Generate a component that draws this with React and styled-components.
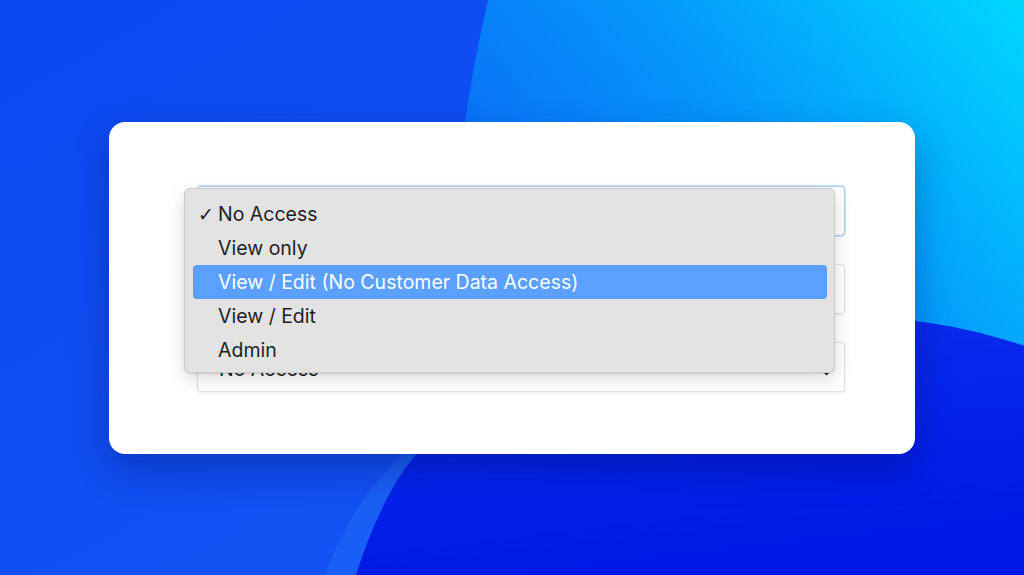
import styled, { createGlobalStyle } from 'styled-components';

const options = ['No Access', 'View only', 'View / Edit (No Customer Data Access)', 'View / Edit', 'Admin'];
const selected = 0;
const highlighted = 2;

const GlobalStyle = createGlobalStyle`
  html, body {
    margin: 0;
    padding: 0;
    width: 100%;
    height: 100%;
    overflow: hidden;
  }
  body {
    font-family: 'Inter', 'Noto Sans', sans-serif;
    -webkit-font-smoothing: antialiased;
  }
`;

const Page = styled.div`
  position: relative;
  width: 1024px;
  height: 575px;
  display: flex;
  align-items: center;
  justify-content: center;
  background: #0e4ff2;
  overflow: hidden;
`;

const Backdrop = styled.svg`
  position: absolute;
  inset: 0;
  width: 100%;
  height: 100%;
`;

const Card = styled.div`
  position: relative;
  width: 806px;
  height: 332px;
  box-sizing: border-box;
  padding: 64px 70px 0 88px;
  background: #fff;
  border-radius: 16px;
  box-shadow: 0 16px 36px rgba(0, 10, 80, 0.3);
`;

const Fields = styled.div`
  position: relative;
  display: flex;
  flex-direction: column;
  gap: 28px;
  width: 648px;
`;

const SelectBox = styled.div`
  position: relative;
  height: 50px;
  box-sizing: border-box;
  display: flex;
  align-items: center;
  justify-content: space-between;
  padding: 5px 13px 0 21px;
  background: #fff;
  border: 1px solid ${(p) => (p.$focused ? '#a8d1ef' : '#e1e1e1')};
  border-radius: 4px;
  box-shadow: ${(p) =>
    p.$focused ? '0 0 0 1px #cfe5f6, 0 1px 3px rgba(0,0,0,0.08)' : '0 1px 3px rgba(0,0,0,0.08)'};
  font-size: 19.5px;
  color: #1e1e1e;
`;

const Chevrons = styled.svg`
  width: 9px;
  height: 16px;
`;

const Menu = styled.ul`
  position: absolute;
  top: 2px;
  left: -13px;
  width: 651px;
  box-sizing: border-box;
  margin: 0;
  padding: 8px 7px 5px 8px;
  list-style: none;
  background: #e3e3e3;
  border: 1px solid #cacaca;
  border-radius: 6px;
  box-shadow: 0 6px 18px rgba(0, 0, 0, 0.14), 0 1px 2px rgba(0, 0, 0, 0.1);
`;

const Item = styled.li`
  position: relative;
  height: 34px;
  display: flex;
  align-items: center;
  padding-left: 25px;
  border-radius: 4px;
  font-size: 19.5px;
  color: ${(p) => (p.$active ? '#fff' : '#1e1e1e')};
  background: ${(p) => (p.$active ? '#5aa0fc' : 'transparent')};
`;

const Check = styled.span`
  position: absolute;
  left: 5px;
  top: 50%;
  transform: translateY(-52%);
  font-size: 19px;
  font-family: 'DejaVu Sans', sans-serif;
`;

function Select({ focused }) {
  return (
    <SelectBox $focused={focused}>
      <span>No Access</span>
      <Chevrons viewBox="0 0 9 16">
        <path d="M1 5 L4.5 1.5 L8 5" fill="none" stroke="#222" strokeWidth="1.6" />
        <path d="M1 11 L4.5 14.5 L8 11 Z" fill="#222" />
      </Chevrons>
    </SelectBox>
  );
}

function Background() {
  return (
    <Backdrop viewBox="0 0 1024 575" preserveAspectRatio="none">
      <defs>
        <linearGradient id="base" x1="0" y1="0" x2="1" y2="1">
          <stop offset="0" stopColor="#0c48f0" />
          <stop offset="1" stopColor="#1656f4" />
        </linearGradient>
        <linearGradient id="cyan" x1="0" y1="0.6" x2="1" y2="0">
          <stop offset="0" stopColor="#0b62f4" />
          <stop offset="0.5" stopColor="#0596fb" />
          <stop offset="1" stopColor="#00d8ff" />
        </linearGradient>
        <linearGradient id="deep" x1="0" y1="0" x2="0.3" y2="1">
          <stop offset="0" stopColor="#0a30ee" />
          <stop offset="1" stopColor="#0019e6" />
        </linearGradient>
      </defs>
      <rect width="1024" height="575" fill="url(#base)" />
      <path d="M488 0 C472 70 460 140 455 220 C450 300 450 380 460 420 L1024 360 L1024 0 Z" fill="url(#cyan)" />
      <path d="M325 575 C345 520 375 475 415 445 L900 320 C960 330 1000 338 1024 345 L1024 575 Z" fill="#1a62f5" opacity="0.85" />
      <path d="M356 575 C370 530 392 480 420 450 C520 360 700 320 915 321 C960 326 1000 338 1024 346 L1024 575 Z" fill="url(#deep)" />
    </Backdrop>
  );
}

export default function App() {
  return (
    <>
      <GlobalStyle />
      <Page>
        <Background />
        <Card>
          <Fields>
            <Select focused />
            <Select />
            <Select />
            <Menu>
              {options.map((label, i) => (
                <Item key={label} $active={i === highlighted}>
                  {i === selected && <Check>✓</Check>}
                  {label}
                </Item>
              ))}
            </Menu>
          </Fields>
        </Card>
      </Page>
    </>
  );
}
